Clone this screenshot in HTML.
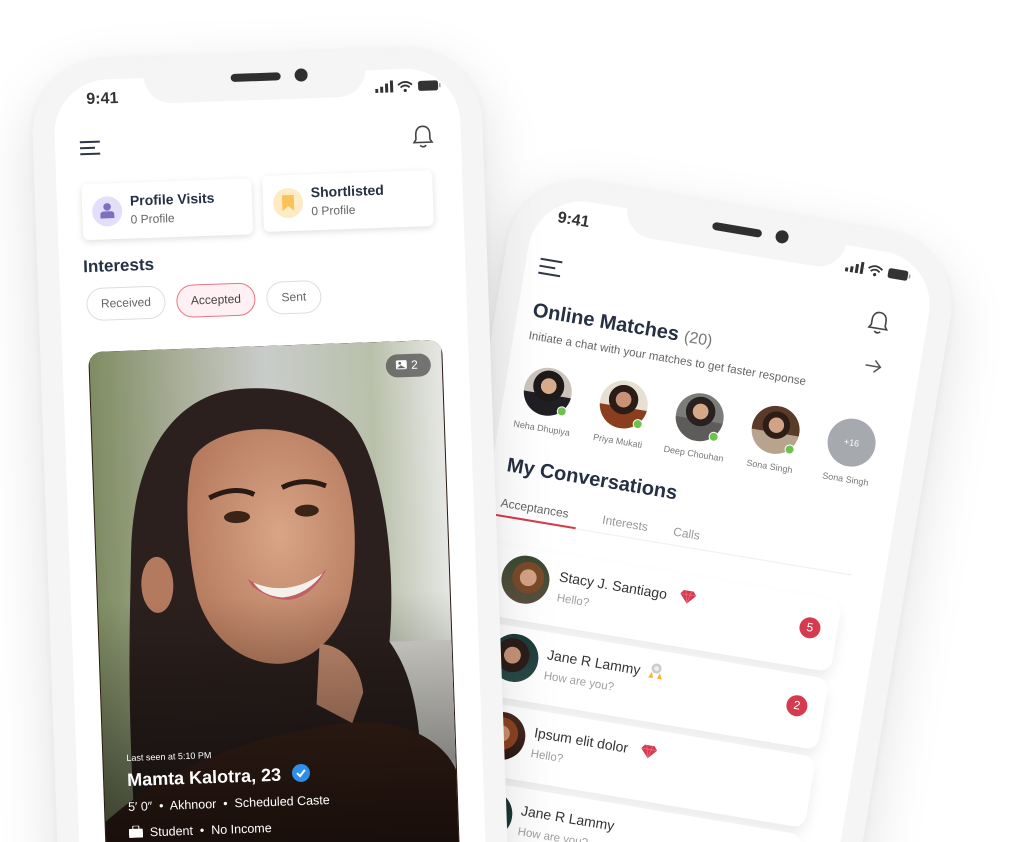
<!DOCTYPE html>
<html style="width:1018px;height:842px;overflow:hidden"><head><meta charset="utf-8"><style>
*{margin:0;padding:0;box-sizing:border-box}
body{width:1018px;height:842px;overflow:hidden;background:#fff;font-family:"Liberation Sans",sans-serif;position:relative}
#wrap{position:absolute;left:0;top:0;width:1018px;height:842px;overflow:hidden}
.phone{position:absolute;width:450px;height:1000px;border-radius:74px;background:#f5f5f5;transform-origin:0 0;box-shadow:0 20px 60px rgba(0,0,0,.13),0 0 8px rgba(0,0,0,.04)}
.screen{position:absolute;left:22px;top:20px;width:406px;height:960px;border-radius:54px;background:#fff;overflow:hidden}
.notch{position:absolute;left:113px;top:0;width:222px;height:46px;background:#f5f5f5;border-radius:0 0 28px 28px}
.spk{position:absolute;left:200px;top:19px;width:50px;height:8px;border-radius:4px;background:#2f2f2f}
.cam{position:absolute;left:264px;top:16px;width:13px;height:13px;border-radius:50%;background:#2f2f2f}
.abs{position:absolute}
.time{font-weight:bold;font-size:16px;color:#333}
.card{position:absolute;background:#fff;border-radius:6px;box-shadow:0 2px 7px rgba(0,0,0,.13)}
.pill{position:absolute;height:33px;border:1px solid #ddd;border-radius:17px;font-size:12px;color:#666;text-align:center;line-height:31px}
.ttl{font-weight:bold;color:#253043}
.av{position:absolute;width:48px;height:48px;border-radius:50%;overflow:hidden}
.dot{position:absolute;width:10px;height:10px;border-radius:50%;background:#6cc24a;border:1.5px solid #fff}
.nm{position:absolute;width:90px;text-align:center;font-size:9px;color:#777}
.cc{position:absolute;left:24px;width:366px;height:72px;background:#fff;border-radius:12px;box-shadow:0 8px 14px rgba(0,0,0,.08)}
.cav{position:absolute;width:48px;height:48px;border-radius:50%;overflow:hidden}
.cn{position:absolute;font-size:14px;color:#333}
.cs{position:absolute;font-size:11.5px;color:#a0a0a0}
.badge{position:absolute;width:21px;height:21px;border-radius:50%;background:#d63a4f;color:#fff;font-size:12px;text-align:center;line-height:21px}
</style></head><body><div id="wrap">

<!-- RIGHT PHONE -->
<div class="phone" style="left:519px;top:170px;transform:rotate(9.5deg);z-index:1">
 <div class="screen"></div>
 <div class="notch"></div><div class="spk"></div><div class="cam"></div>
 <div class="abs time" style="left:46px;top:32px">9:41</div>
 <svg class="abs" style="left:338px;top:34px" width="66" height="14" viewBox="0 0 66 14">
  <rect x="0" y="8" width="3" height="4" fill="#333"/><rect x="5" y="6" width="3" height="6" fill="#333"/><rect x="10" y="3" width="3" height="9" fill="#333"/><rect x="15" y="0" width="3" height="12" fill="#333"/>
  <path d="M23 5 Q30 -1 37 5 M25.5 7.5 Q30 3.5 34.5 7.5" stroke="#333" stroke-width="1.8" fill="none"/><circle cx="30" cy="10.5" r="1.6" fill="#333"/>
  <rect x="43" y="1.5" width="20" height="10" rx="2.5" fill="#333"/><rect x="64" y="4.5" width="1.5" height="4" fill="#999"/>
 </svg>
 <svg class="abs" style="left:35px;top:82px" width="24" height="18"><path d="M1 2H23M1 9H17M1 16H23" stroke="#2d3748" stroke-width="2"/></svg>
 <svg class="abs" style="left:369px;top:79px" width="22" height="25" viewBox="0 0 22 25"><path d="M11 2C6 2 4 6 4 10V15L2 18H20L18 15V10C18 6 16 2 11 2Z M8 21Q11 24 14 21" stroke="#444" stroke-width="1.6" fill="none"/></svg>
 <div class="abs ttl" style="left:37px;top:125px;font-size:20px">Online Matches <span style="font-weight:normal;color:#777;font-size:16px">(20)</span></div>
 <div class="abs" style="left:37px;top:155px;font-size:11.6px;color:#666">Initiate a chat with your matches to get faster response</div>
 <svg class="abs" style="left:373px;top:128px" width="18" height="14"><path d="M1 7H16M10 1L16 7L10 13" stroke="#555" stroke-width="1.5" fill="none"/></svg>
 <div class="av" style="left:41px;top:190px;background:radial-gradient(circle at 50% 38%,#d8ab8c 0 20%,#1e1a1a 21% 40%,transparent 41%),linear-gradient(#cbc4bd 55%,#1f1f24 56%)"></div><div class="dot" style="left:77px;top:226px"></div>
 <div class="av" style="left:118px;top:190px;background:radial-gradient(circle at 48% 40%,#c99274 0 20%,#2a1d18 21% 38%,transparent 39%),linear-gradient(#e6dfd3 55%,#8a3e1e 56%)"></div><div class="dot" style="left:154px;top:226px"></div>
 <div class="av" style="left:195px;top:190px;background:radial-gradient(circle at 50% 38%,#d6a88a 0 20%,#2a2020 21% 38%,transparent 39%),linear-gradient(#7b7e78 55%,#5e5c5a 56%)"></div><div class="dot" style="left:231px;top:226px"></div>
 <div class="av" style="left:272px;top:190px;background:radial-gradient(circle at 50% 40%,#d1a283 0 20%,#2c1d16 21% 36%,transparent 37%),linear-gradient(#5a3a28 55%,#b8a48e 56%)"></div><div class="dot" style="left:308px;top:226px"></div>
 <div class="av" style="left:349px;top:190px;background:#a6a9ae;color:#fff;font-size:9px;text-align:center;line-height:48px">+16</div>
 <div class="nm" style="left:20px;top:246px">Neha Dhupiya</div>
 <div class="nm" style="left:97px;top:246px">Priya Mukati</div>
 <div class="nm" style="left:174px;top:246px">Deep Chouhan</div>
 <div class="nm" style="left:251px;top:246px">Sona Singh</div>
 <div class="nm" style="left:328px;top:246px">Sona Singh</div>
 <div class="abs ttl" style="left:37px;top:282px;font-size:20px">My Conversations</div>
 <div class="abs" style="left:37px;top:324px;font-size:12px;color:#666">Acceptances</div>
 <div class="abs" style="left:140px;top:324px;font-size:12px;color:#999">Interests</div>
 <div class="abs" style="left:212px;top:324px;font-size:12px;color:#999">Calls</div>
 <div class="abs" style="left:30px;top:343px;width:85px;height:2px;background:#d63a4f"></div>
 <div class="abs" style="left:115px;top:344px;width:280px;height:1px;background:#eee"></div>
 <div class="cc" style="top:372px"></div>
 <div class="cav" style="left:50px;top:379px;background:radial-gradient(circle at 55% 45%,#d4a284 0 22%,#7a4a2a 23% 42%,transparent 43%),linear-gradient(#3a4a30,#5a5040)"></div>
 <div class="cn" style="left:107px;top:386px">Stacy J. Santiago</div>
 <svg class="abs" style="left:229px;top:386px" width="16" height="14"><path d="M3 1H13L16 5L8 14L0 5Z" fill="#d63a4f"/><path d="M0 5H16M5 1L8 14L11 1" stroke="#f07080" stroke-width=".7" fill="none"/></svg>
 <div class="cs" style="left:108px;top:410px">Hello?</div>
 <div class="badge" style="left:352px;top:393px">5</div>
 <div class="cc" style="top:451px"></div>
 <div class="cav" style="left:52px;top:458px;background:radial-gradient(circle at 45% 45%,#c59378 0 22%,#2a1e1a 23% 45%,transparent 46%),linear-gradient(#1d3a3a,#2a4a48)"></div>
 <div class="cn" style="left:108px;top:465px">Jane R Lammy</div>
 <svg class="abs" style="left:210px;top:463px" width="16" height="18"><circle cx="8" cy="6" r="5" fill="#ccc"/><circle cx="8" cy="6" r="2.5" fill="#eee"/><path d="M4 10L1 16H6ZM12 10L15 16H10Z" fill="#f5b73b"/></svg>
 <div class="cs" style="left:108px;top:489px">How are you?</div>
 <div class="badge" style="left:352px;top:472px">2</div>
 <div class="cc" style="top:530px"></div>
 <div class="cav" style="left:52px;top:537px;background:radial-gradient(circle at 50% 45%,#c89070 0 22%,#8a4422 23% 45%,transparent 46%),linear-gradient(#4a2a20,#2a1a14)"></div>
 <div class="cn" style="left:108px;top:544px">Ipsum elit dolor</div>
 <svg class="abs" style="left:216px;top:545px" width="16" height="14"><path d="M3 1H13L16 5L8 14L0 5Z" fill="#d63a4f"/><path d="M0 5H16M5 1L8 14L11 1" stroke="#f07080" stroke-width=".7" fill="none"/></svg>
 <div class="cs" style="left:108px;top:568px">Hello?</div>
 <div class="cc" style="top:609px"></div>
 <div class="cav" style="left:52px;top:616px;background:radial-gradient(circle at 45% 45%,#c59378 0 22%,#1e1a1a 23% 45%,transparent 46%),linear-gradient(#163030,#20403e)"></div>
 <div class="cn" style="left:108px;top:623px">Jane R Lammy</div>
 <div class="cs" style="left:108px;top:647px">How are you?</div>
</div>

<!-- LEFT PHONE -->
<div class="phone" style="left:30px;top:62px;transform:rotate(-2deg);z-index:2">
 <div class="screen"></div>
 <div class="notch"></div><div class="spk"></div><div class="cam"></div>
 <div class="abs time" style="left:55px;top:31px">9:41</div>
 <svg class="abs" style="left:344px;top:31px" width="66" height="14" viewBox="0 0 66 14">
  <rect x="0" y="8" width="3" height="4" fill="#333"/><rect x="5" y="6" width="3" height="6" fill="#333"/><rect x="10" y="3" width="3" height="9" fill="#333"/><rect x="15" y="0" width="3" height="12" fill="#333"/>
  <path d="M23 5 Q30 -1 37 5 M25.5 7.5 Q30 3.5 34.5 7.5" stroke="#333" stroke-width="1.8" fill="none"/><circle cx="30" cy="10.5" r="1.6" fill="#333"/>
  <rect x="43" y="1.5" width="20" height="10" rx="2.5" fill="#333"/><rect x="64" y="4.5" width="1.5" height="4" fill="#999"/>
 </svg>
 <svg class="abs" style="left:46px;top:80px" width="22" height="16"><path d="M1 2H21M1 8H16M1 14H21" stroke="#2d3748" stroke-width="2"/></svg>
 <svg class="abs" style="left:379px;top:76px" width="22" height="25" viewBox="0 0 22 25"><path d="M11 2C6 2 4 6 4 10V15L2 18H20L18 15V10C18 6 16 2 11 2Z M8 21Q11 24 14 21" stroke="#444" stroke-width="1.6" fill="none"/></svg>
 <div class="card" style="left:47px;top:124px;width:170px;height:56px">
  <div class="abs" style="left:10px;top:13px;width:30px;height:30px;border-radius:50%;background:#e3defa"></div>
  <svg class="abs" style="left:18px;top:19px" width="14" height="16"><circle cx="7" cy="4.5" r="3.8" fill="#7f6fc0"/><path d="M0 16V12Q0 9 4 9H10Q14 9 14 12V16Z" fill="#7f6fc0"/></svg>
  <div class="abs ttl" style="left:48px;top:10px;font-size:14px">Profile Visits</div>
  <div class="abs" style="left:48px;top:30px;font-size:12px;color:#666">0 Profile</div>
 </div>
 <div class="card" style="left:228px;top:122px;width:170px;height:56px">
  <div class="abs" style="left:10px;top:13px;width:30px;height:30px;border-radius:50%;background:#fdebc5"></div>
  <svg class="abs" style="left:19px;top:20px" width="12" height="16"><path d="M0 0H12V16L6 11L0 16Z" fill="#fbc25c"/></svg>
  <div class="abs ttl" style="left:48px;top:10px;font-size:14px">Shortlisted</div>
  <div class="abs" style="left:48px;top:30px;font-size:12px;color:#666">0 Profile</div>
 </div>
 <div class="abs ttl" style="left:46px;top:197px;font-size:17px">Interests</div>
 <div class="pill" style="left:48px;top:228px;width:79px">Received</div>
 <div class="pill" style="left:138px;top:228px;width:79px;border-color:#e87583;background:#fff1f3;color:#444">Accepted</div>
 <div class="pill" style="left:228px;top:228px;width:55px">Sent</div>
 <div class="abs" style="left:48px;top:292px;width:354px;height:700px;border-radius:14px;overflow:hidden;background:#2a1812">
  <svg width="354" height="700" viewBox="0 0 352 700" style="display:block">
   <defs>
    <linearGradient id="bg" x1="0" x2="1" y1="0" y2="0"><stop offset="0" stop-color="#7f8c62"/><stop offset=".25" stop-color="#a9ae98"/><stop offset=".5" stop-color="#c9ccca"/><stop offset=".8" stop-color="#b9c0aa"/><stop offset="1" stop-color="#e6e7e4"/></linearGradient>
    <linearGradient id="dk" x1="0" x2="0" y1="0" y2="1"><stop offset="0" stop-color="#000" stop-opacity="0"/><stop offset="1" stop-color="#000" stop-opacity=".7"/></linearGradient>
    <radialGradient id="face" cx=".55" cy=".45" r=".6"><stop offset="0" stop-color="#d9a487"/><stop offset="1" stop-color="#b57a5d"/></radialGradient>
   </defs>
   <rect width="352" height="700" fill="url(#bg)"/>
   <rect x="240" y="300" width="112" height="120" fill="#d9d8d2"/>
   <path d="M150 42C80 45 40 110 35 200C30 300 20 400 40 700H300C320 450 330 360 290 300C300 220 290 120 260 80C235 55 200 40 150 42Z" fill="#2b201d"/>
   <path d="M0 470C60 420 140 390 240 380C300 375 340 400 352 430V700H0Z" fill="#3a2219"/>
   <ellipse cx="60" cy="235" rx="16" ry="28" fill="#b47a5f"/>
   <path d="M100 110C120 78 200 70 240 110C265 140 262 220 250 260C235 300 205 320 175 318C140 315 112 290 100 250C90 200 90 140 100 110Z" fill="url(#face)"/>
   <path d="M220 300C240 300 260 320 262 350L250 380L215 360Z" fill="#c48b6e"/>
   <path d="M115 150Q140 138 160 148M188 142Q210 132 232 142" stroke="#2a1a14" stroke-width="5" fill="none"/>
   <ellipse cx="142" cy="170" rx="13" ry="6" fill="#3a2418"/><ellipse cx="212" cy="166" rx="12" ry="6" fill="#3a2418"/>
   <path d="M150 232Q190 260 230 225Q200 275 155 240Z" fill="#c25e66"/>
   <path d="M156 236Q190 252 226 229Q210 250 185 252Q165 250 156 236Z" fill="#f4f0ea"/>
   <rect y="250" width="352" height="300" fill="url(#dk)"/>
   <rect y="550" width="352" height="150" fill="#000" opacity=".7"/>
  </svg>
  <div class="abs" style="left:297px;top:13px;width:45px;height:23px;border-radius:12px;background:rgba(80,80,80,.75);color:#fff;font-size:12px;line-height:23px;padding-left:10px">
   <svg width="12" height="11" style="vertical-align:-1px"><rect x="0" y="1" width="11" height="9" rx="1.5" fill="#fff"/><circle cx="4" cy="4" r="1.4" fill="#666"/><path d="M1 9L5 6L10 9Z" fill="#666"/></svg> 2</div>
  <div class="abs" style="left:24px;top:402px;font-size:9px;color:#fff">Last seen at 5:10 PM</div>
  <div class="abs" style="left:24px;top:419px;font-size:18px;font-weight:bold;color:#fff">Mamta Kalotra, 23 <svg width="18" height="18" style="vertical-align:-2px;margin-left:6px"><circle cx="9" cy="9" r="9" fill="#2f8fe8"/><path d="M5 9L8 12L13 6" stroke="#fff" stroke-width="2" fill="none"/></svg></div>
  <div class="abs" style="left:24px;top:449px;font-size:12.5px;color:#fff">5′ 0″ &nbsp;•&nbsp; Akhnoor &nbsp;•&nbsp; Scheduled Caste</div>
  <div class="abs" style="left:24px;top:475px;font-size:12.5px;color:#fff"><svg width="14" height="12" style="vertical-align:-1px"><rect x="0" y="3" width="14" height="9" rx="1" fill="#fff"/><rect x="4" y="0" width="6" height="4" rx="1" stroke="#fff" fill="none"/></svg> &nbsp;Student &nbsp;•&nbsp; No Income</div>
 </div>
</div>
</div></body></html>
